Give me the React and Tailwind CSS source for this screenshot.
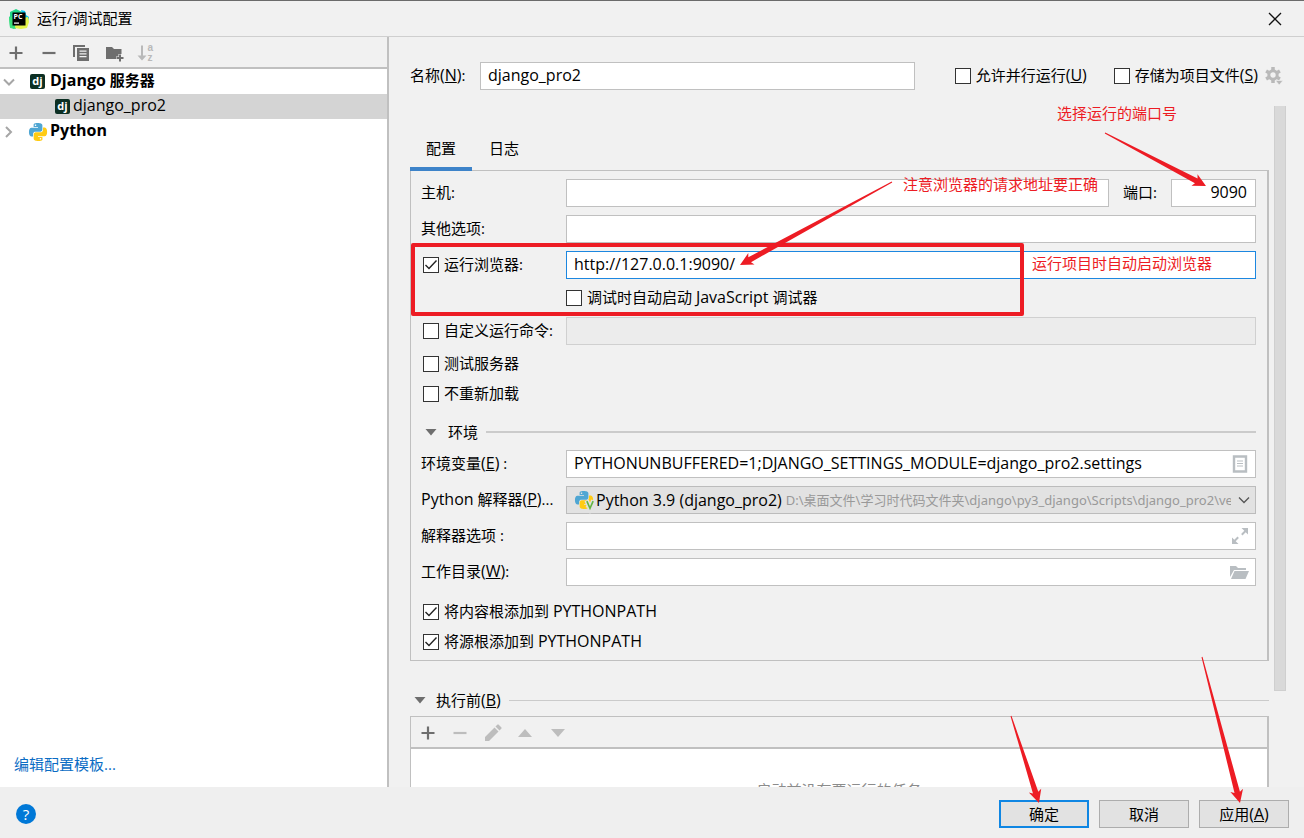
import React from 'react';

const PY_TOP =
  'M14.25.18l.9.2.73.26.59.3.45.32.34.34.25.34.16.33.1.3.04.26.02.2-.01.13V8.5l-.05.63-.13.55-.21.46-.26.38-.3.31-.33.25-.35.19-.35.14-.33.1-.3.07-.26.04-.21.02H8.77l-.69.05-.59.14-.5.22-.41.27-.33.32-.27.35-.2.36-.15.37-.1.35-.07.32-.04.27-.02.21v3.06H3.17l-.21-.03-.28-.07-.32-.12-.35-.18-.36-.26-.36-.36-.35-.46-.32-.59-.28-.73-.21-.88-.14-1.05-.05-1.23.06-1.22.16-1.04.24-.87.32-.71.36-.57.4-.44.42-.33.42-.24.4-.16.36-.1.32-.05.24-.01h.16l.06.01h8.16v-.83H6.18l-.01-2.75-.02-.37.05-.34.11-.31.17-.28.25-.26.31-.23.38-.2.44-.18.51-.15.58-.12.64-.1.71-.06.77-.04.84-.02 1.27.05zm-6.3 1.98l-.23.33-.08.41.08.41.23.34.33.22.41.09.41-.09.33-.22.23-.34.08-.41-.08-.41-.23-.33-.33-.22-.41-.09-.41.09z';
const PY_BOTTOM =
  'M21.1 6.11l.28.06.32.12.35.18.36.27.36.35.35.47.32.59.28.73.21.88.14 1.04.05 1.23-.06 1.23-.16 1.04-.24.86-.32.71-.36.57-.4.45-.42.33-.42.24-.4.16-.36.09-.32.05-.24.02-.16-.01h-8.22v.82h5.84l.01 2.76.02.36-.05.34-.11.31-.17.29-.25.25-.31.24-.38.2-.44.17-.51.15-.58.13-.64.09-.71.07-.77.04-.84.01-1.27-.04-1.07-.14-.9-.2-.73-.25-.59-.3-.45-.33-.34-.34-.25-.34-.16-.33-.1-.3-.04-.25-.02-.2.01-.13v-5.34l.05-.64.13-.54.21-.46.26-.38.3-.32.33-.24.35-.2.35-.14.33-.1.3-.06.26-.04.21-.02.13-.01h5.84l.69-.05.59-.14.5-.21.41-.28.33-.32.27-.35.2-.36.15-.36.1-.35.07-.32.04-.28.02-.21V6.07h2.09l.14.01zm-6.47 14.25l-.23.33-.08.41.08.41.23.33.33.23.41.08.41-.08.33-.23.23-.33.08-.41-.08-.41-.23-.33-.33-.23-.41-.08-.41.08z';

function PythonIcon({ venv }) {
  return (
    <svg viewBox="0 0 24 24" className="size-[18px] shrink-0 overflow-visible" aria-hidden="true">
      <path d={PY_TOP} fill="#4fa6d3" />
      <path d={PY_BOTTOM} fill="#ffcb13" />
      {venv && (
        <path d="M15.5 12.5 20 23.5 24.5 12.5" fill="none" stroke="#e2e2e2" strokeWidth="6" />
      )}
      {venv && (
        <path d="M15.8 13.5 20 23 24.2 13.5" fill="none" stroke="#62b543" strokeWidth="2.2" />
      )}
    </svg>
  );
}

function DjangoIcon() {
  return (
    <span
      aria-hidden="true"
      className="flex size-[15px] shrink-0 items-center justify-center rounded-[2px] bg-[#0c2f23] pb-px text-[11px] leading-[14px] font-bold text-white"
    >
      dj
    </span>
  );
}

function PyCharmIcon() {
  return (
    <svg viewBox="0 0 20 20" className="size-5" aria-hidden="true">
      <path d="M1 3 7 0l6 3-3 8-9 4z" fill="#21d789" />
      <path d="M12 1l4 1 1 4 3 2-1 5-4 2z" fill="#07c3f2" />
      <path d="M0 8 4 5l4 11-3 4-4-2z" fill="#21d789" />
      <path d="M14 9l5-1 1 5-2 6-6 1-7-1 2-4z" fill="#e4f34a" />
      <path d="M0 9l3-2 2 9 2 4-6-1z" fill="#3be07a" />
      <rect x="3.500" y="3.500" width="13" height="13" fill="#000" />
      <text x="4.500" y="10" fontSize="7" fontWeight="700" fill="#fff">PC</text>
      <rect x="5" y="13.500" width="5" height="1.200" fill="#fff" />
    </svg>
  );
}

const Plus = () => (
  <svg viewBox="0 0 16 16" className="size-4" fill="none" stroke="#6e6e6e" strokeWidth="2.2" aria-hidden="true">
    <path d="M8 1.500v13M1.500 8h13" />
  </svg>
);
const Minus = ({ color = '#6e6e6e' }) => (
  <svg viewBox="0 0 16 16" className="size-4" fill="none" stroke={color} strokeWidth="2.2" aria-hidden="true">
    <path d="M1.500 8h13" />
  </svg>
);
const CopyIcon = () => (
  <svg viewBox="0 0 18 18" className="size-[18px]" aria-hidden="true">
    <path d="M1 13V1h12v2H3v10z" fill="#6e6e6e" />
    <path fillRule="evenodd" d="M5 4h12v13H5zM7.5 6.500v1.300h7V6.500zM7.500 9.200v1.300h7V9.200zM7.500 11.900v1.300h7v-1.300z" fill="#6e6e6e" />
  </svg>
);
const FolderPlus = () => (
  <svg viewBox="0 0 20 18" className="h-[18px] w-5" aria-hidden="true">
    <path d="M1 3h6l2 2h7.500v5h-3v2.500H11V15H1z" fill="#6e6e6e" />
    <path d="M15 10.500v7M11.500 14h7" stroke="#6e6e6e" strokeWidth="2" />
  </svg>
);
const SortIcon = () => (
  <svg viewBox="0 0 18 18" className="size-[18px] overflow-visible font-['Liberation_Sans',sans-serif]" aria-hidden="true">
    <path d="M4 1.500h2v10h3.500L5 16.500.5 11.500H4z" fill="#b9b9b9" />
    <text x="10.500" y="7" fontSize="10" fontWeight="700" fill="#b9b9b9">a</text>
    <text x="10.500" y="17" fontSize="10" fontWeight="700" fill="#b9b9b9">z</text>
  </svg>
);
const Gear = () => (
  <svg viewBox="0 0 18 18" className="size-[18px]" aria-hidden="true">
    <g fill="none" stroke="#b9b9b9">
      <circle cx="8" cy="8" r="4.200" strokeWidth="3" />
      <path d="M8 0v3M8 13v3M1.100 4l2.600 1.500M12.300 10.500l2.600 1.500M1.100 12l2.600-1.500M12.300 5.500 14.900 4" strokeWidth="3.500" />
    </g>
    <path d="M10.500 13.500h7.500L14.200 18z" fill="#b9b9b9" stroke="#f1f1f1" strokeWidth=".6" />
  </svg>
);
const Triangle = () => (
  <svg viewBox="0 0 12 8" className="h-2 w-3" aria-hidden="true">
    <path d="M.5 1h11L6 7.500z" fill="#6e6e6e" />
  </svg>
);
const Chevron = ({ right }) => (
  <svg viewBox="0 0 12 12" className="size-3" fill="none" stroke="#a6a6a6" strokeWidth="2" aria-hidden="true">
    <path d={right ? 'M3 1l5 5-5 5' : 'M1 3.500l5 5 5-5'} />
  </svg>
);

const Latin = ({ children }) => <span className="text-[16px]">{children}</span>;
const Mnemonic = ({ letter }) => <span className="text-[16px]">(<u>{letter}</u>)</span>;

function Check({ id, checked, children }) {
  return (
    <span className="flex items-center gap-[5px] whitespace-nowrap">
      <span className="relative flex size-4 shrink-0">
        <input
          id={id}
          type="checkbox"
          defaultChecked={checked}
          className="peer size-4 appearance-none border border-[#333] bg-white"
        />
        <svg
          viewBox="0 0 16 16"
          className="pointer-events-none absolute inset-0 hidden size-4 peer-checked:block"
          fill="none"
          stroke="#222"
          strokeWidth="1.400"
          aria-hidden="true"
        >
          <path d="M2.500 8 6 11.500l7.500-8" />
        </svg>
      </span>
      <label htmlFor={id} className="pb-0.5">{children}</label>
    </span>
  );
}

const inputBase = 'h-7 w-full min-w-0 border border-[#c0c0c0] bg-white px-[7px] pb-0.5 text-[16px] outline-none';

function Row({ label, children }) {
  return (
    <div className="flex h-7 items-center">
      <div className="w-[145px] shrink-0 whitespace-nowrap">{label}</div>
      <div className="flex min-w-0 flex-1 items-center">{children}</div>
    </div>
  );
}

function FieldLabel({ htmlFor, children }) {
  return (
    <label htmlFor={htmlFor} className="block pb-0.5">
      {children}
    </label>
  );
}

function FieldWithIcon({ id, value, icon, label }) {
  return (
    <div className="relative flex flex-1">
      <input id={id} type="text" defaultValue={value} className={`${inputBase} pr-9`} />
      <button type="button" aria-label={label} className="absolute top-[5px] right-[7px]">
        {icon}
      </button>
    </div>
  );
}

function arrowPoints([x1, y1], [x2, y2]) {
  const len = Math.hypot(x2 - x1, y2 - y1);
  const ux = (x2 - x1) / len;
  const uy = (y2 - y1) / len;
  const at = (back, side) => `${x2 - ux * back - uy * side},${y2 - uy * back + ux * side}`;
  return [at(len, 0.5), at(11, 2.8), at(13, 6.5), at(0, 0), at(13, -6.5), at(11, -2.8), at(len, -0.5)].join(' ');
}

const ARROWS = [
  [[1105, 133], [1206, 186]],
  [[892, 182], [740, 265]],
  [[1011, 716], [1039, 803]],
  [[1202, 657], [1240, 803]],
];

function Annotations() {
  return (
    <div className="pointer-events-none absolute inset-0 whitespace-nowrap text-[#ed1c24]">
      <div className="absolute top-[243px] left-[411px] h-[73px] w-[613px] rounded-[2px] border-4 border-[#ed1c24]" />
      <svg className="absolute top-0 left-0 size-full" aria-hidden="true">
        {ARROWS.map(([from, to]) => (
          <polygon key={from.join()} points={arrowPoints(from, to)} fill="#ed1c24" />
        ))}
      </svg>
      <span className="absolute top-[102px] left-[1057px]">选择运行的端口号</span>
      <span className="absolute top-[173px] left-[903px]">注意浏览器的请求地址要正确</span>
      <span className="absolute top-[252px] left-[1032px]">运行项目时自动启动浏览器</span>
    </div>
  );
}

function Sidebar() {
  return (
    <aside className="flex w-[389px] shrink-0 flex-col border-r-2 border-[#c0c0c0] bg-white">
      <div className="flex h-8 shrink-0 items-center border-b-2 border-[#c0c0c0] bg-[#f1f1f1] pt-0.5 pl-2">
        <button type="button" aria-label="添加"><Plus /></button>
        <button type="button" aria-label="移除" className="ml-[17px]"><Minus /></button>
        <button type="button" aria-label="复制" className="ml-[15px]"><CopyIcon /></button>
        <button type="button" aria-label="新建文件夹" className="ml-[15px]"><FolderPlus /></button>
        <button type="button" aria-label="排序" className="ml-3"><SortIcon /></button>
      </div>
      <ul className="flex-1">
        <li className="flex h-[25px] items-center pl-[3px] font-bold">
          <Chevron />
          <span className="ml-[15px] flex items-center gap-[5px]">
            <DjangoIcon />
            <span className="pb-[3px]"><Latin>Django</Latin> 服务器</span>
          </span>
        </li>
        <li className="flex h-[25px] items-center gap-[3px] bg-[#d4d4d4] pl-[55px]">
          <DjangoIcon />
          <span className="pb-[3px]"><Latin>django_pro2</Latin></span>
        </li>
        <li className="flex h-[25px] items-center pl-[3px] font-bold">
          <Chevron right />
          <span className="ml-3.5 flex items-center gap-[3px]">
            <PythonIcon />
            <span className="pb-[3px]"><Latin>Python</Latin></span>
          </span>
        </li>
      </ul>
      <a href="#templates" className="mb-3 ml-3.5 self-start text-[#0a6cc4]">编辑配置模板...</a>
    </aside>
  );
}

function ConfigPanel() {
  return (
    <div className="border-r-2 border-b border-l border-[#c0c0c0] pt-2 pr-[11px] pb-[3px] pl-2.5">
      <div className="flex flex-col gap-2">
        <Row label={<FieldLabel htmlFor="host">主机:</FieldLabel>}>
          <input id="host" type="text" className={`${inputBase} flex-1`} />
          <label htmlFor="port" className="mx-3.5 shrink-0 pb-0.5">端口:</label>
          <input
            id="port"
            type="text"
            defaultValue="9090"
            className="h-7 w-[85px] shrink-0 border border-[#c0c0c0] bg-white px-2 pb-0.5 text-right text-[16px] outline-none"
          />
        </Row>
        <Row label={<FieldLabel htmlFor="extra">其他选项:</FieldLabel>}>
          <input id="extra" type="text" className={inputBase} />
        </Row>
        <Row label={<div className="pl-0.5"><Check id="browser" checked>运行浏览器:</Check></div>}>
          <input
            type="text"
            aria-label="浏览器地址"
            defaultValue="http://127.0.0.1:9090/"
            className="h-7 w-full border border-[#1c87e0] bg-white px-[7px] pb-0.5 text-[16px] outline-none"
          />
        </Row>
      </div>
      <div className="mt-[5px] flex h-7 items-center pl-[145px]">
        <Check id="js">调试时自动启动 <Latin>JavaScript</Latin> 调试器</Check>
      </div>
      <div className="mt-[5px]">
        <Row label={<div className="pl-0.5"><Check id="custom">自定义运行命令:</Check></div>}>
          <input type="text" aria-label="自定义运行命令" disabled className="h-7 w-full border border-[#d0d0d0] bg-[#ececec]" />
        </Row>
      </div>
      <div className="mt-1 flex h-[30px] items-center pl-0.5"><Check id="test">测试服务器</Check></div>
      <div className="flex h-[30px] items-center pl-0.5"><Check id="noreload">不重新加载</Check></div>
      <div className="mt-2 flex h-[30px] items-center pl-1">
        <button type="button" aria-label="折叠环境" className="mr-[11px]"><Triangle /></button>
        <span>环境</span>
        <span className="ml-2 h-0.5 flex-1 bg-[#cbcbcb]" />
      </div>
      <div className="mt-[3px] flex flex-col gap-2">
        <Row label={<FieldLabel htmlFor="env">环境变量<Mnemonic letter="E" /> :</FieldLabel>}>
          <FieldWithIcon
            id="env"
            value="PYTHONUNBUFFERED=1;DJANGO_SETTINGS_MODULE=django_pro2.settings"
            label="编辑环境变量"
            icon={
              <svg viewBox="0 0 18 18" className="size-[18px]" fill="none" stroke="#b9bec2" aria-hidden="true">
                <path d="M3 1.500h12v15H3z" strokeWidth="2.400" />
                <path d="M6 6h6M6 8.500h6M6 11h6" />
              </svg>
            }
          />
        </Row>
        <Row label={<FieldLabel htmlFor="interp"><Latin>Python</Latin> 解释器<Mnemonic letter="P" />...</FieldLabel>}>
          <div className="relative flex h-7 min-w-0 flex-1 items-center border border-[#bcbcbc] bg-[#e2e2e2] pl-2">
            <PythonIcon venv />
            <span className="ml-[3px] shrink-0"><Latin>Python 3.9 (django_pro2)</Latin></span>
            <span className="mr-6 ml-1 min-w-0 flex-1 overflow-hidden font-['Noto_Sans','Noto_Sans_CJK_SC',sans-serif] text-[13px] whitespace-nowrap text-[#999]">
              D:\桌面文件\学习时代码文件夹\django\py3_django\Scripts\django_pro2\venv
            </span>
            <svg viewBox="0 0 12 12" className="absolute right-[5px] size-3" fill="none" stroke="#555" strokeWidth="1.300" aria-hidden="true">
              <path d="M1 3.500l5 5 5-5" />
            </svg>
            <select id="interp" className="absolute inset-0 size-full opacity-0">
              <option>Python 3.9 (django_pro2)</option>
            </select>
          </div>
        </Row>
        <Row label={<FieldLabel htmlFor="opts">解释器选项 :</FieldLabel>}>
          <FieldWithIcon
            id="opts"
            label="展开"
            icon={
              <svg viewBox="0 0 18 18" className="size-[18px]" aria-hidden="true">
                <path d="M10.500 1H17v6.500l-2.300-2.300-3.200 3.200-1.400-1.400 3.200-3.200zM7.500 17H1v-6.500l2.300 2.300 3.200-3.200 1.400 1.400-3.200 3.200z" fill="#b9bec2" />
              </svg>
            }
          />
        </Row>
        <Row label={<FieldLabel htmlFor="cwd">工作目录<Mnemonic letter="W" />:</FieldLabel>}>
          <FieldWithIcon
            id="cwd"
            label="浏览"
            icon={
              <svg viewBox="0 0 19 18" className="h-[18px] w-[19px]" aria-hidden="true">
                <path d="M0 3h6l2 2h8v2H4L0 14z" fill="#b9bec2" />
                <path d="M4.500 8H19l-3.500 8H1z" fill="#b9bec2" />
              </svg>
            }
          />
        </Row>
      </div>
      <div className="mt-[11px] flex h-[30px] items-center pl-0.5">
        <Check id="content" checked>将内容根添加到 <Latin>PYTHONPATH</Latin></Check>
      </div>
      <div className="flex h-[30px] items-center pl-0.5">
        <Check id="source" checked>将源根添加到 <Latin>PYTHONPATH</Latin></Check>
      </div>
    </div>
  );
}

export default function App() {
  return (
    <div className="relative flex h-screen flex-col overflow-hidden bg-[#f1f1f1] font-['Open_Sans','Noto_Sans_CJK_SC',sans-serif] text-[15px] leading-[22px] text-black">
      <header className="flex h-[37px] shrink-0 items-center border-t border-b border-t-[#6b6b6b] border-b-[#cfcfcf] pl-[9px]">
        <PyCharmIcon />
        <h1 className="ml-2 flex-1 pb-0.5">运行/调试配置</h1>
        <button type="button" aria-label="关闭" className="mr-[22px]">
          <svg viewBox="0 0 14 14" className="size-3.5" stroke="#111" strokeWidth="1.300" aria-hidden="true">
            <path d="M1 1l12 12M13 1 1 13" />
          </svg>
        </button>
      </header>

      <div className="flex min-h-0 flex-1">
        <Sidebar />
        <main className="flex min-w-0 flex-1 flex-col overflow-hidden pt-[25px] pr-[18px] pl-[21px]">
          <div className="flex h-7 shrink-0 items-center pr-[3px]">
            <label htmlFor="name" className="w-[70px] shrink-0 pb-0.5">名称<Mnemonic letter="N" />:</label>
            <input id="name" type="text" defaultValue="django_pro2" className={`${inputBase} flex-1`} />
            <div className="ml-10 flex items-center">
              <Check id="parallel">允许并行运行<Mnemonic letter="U" /></Check>
              <span className="ml-[27px]"><Check id="store">存储为项目文件<Mnemonic letter="S" /></Check></span>
              <button type="button" aria-label="设置" className="ml-[7px]"><Gear /></button>
            </div>
          </div>

          <div className="mt-4 flex min-h-0 flex-1 gap-[5px]">
            <div className="min-w-0 flex-1 overflow-hidden">
              <div role="tablist" className="flex h-[65px] items-end border-b border-[#c0c0c0]">
                <button type="button" role="tab" aria-selected="true" className="-mb-px h-[43px] border-b-4 border-[#3d83c9] px-4 pt-px">配置</button>
                <button type="button" role="tab" aria-selected="false" className="-mb-px h-[43px] border-b-4 border-transparent px-[17px] pt-px">日志</button>
              </div>
              <ConfigPanel />
              <section className="mt-6">
                <div className="flex h-[30px] items-center pl-1">
                  <button type="button" aria-label="折叠执行前" className="mr-2.5"><Triangle /></button>
                  <span>执行前<Mnemonic letter="B" /></span>
                  <span className="ml-2 h-px flex-1 bg-[#cbcbcb]" />
                </div>
                <div className="mt-px border-t border-r-2 border-l border-[#c0c0c0]">
                  <div className="flex h-8 items-center gap-4 border-b-2 border-[#c0c0c0] pt-0.5 pl-[9px]">
                    <button type="button" aria-label="添加任务"><Plus /></button>
                    <button type="button" aria-label="移除任务"><Minus color="#bdbdbd" /></button>
                    <button type="button" aria-label="编辑任务">
                      <svg viewBox="0 0 18 18" className="size-[18px]" fill="#bdbdbd" aria-hidden="true">
                        <path d="M1 17v-4L10.500 3.500l4 4L5 17zM11.500 2.500 13.500.5h1l3 3v1l-2 2z" />
                      </svg>
                    </button>
                    <button type="button" aria-label="上移">
                      <svg viewBox="0 0 14 8" className="h-2 w-3.5" fill="#bdbdbd" aria-hidden="true"><path d="M0 8h14L7 0z" /></svg>
                    </button>
                    <button type="button" aria-label="下移" className="ml-[3px]">
                      <svg viewBox="0 0 14 8" className="h-2 w-3.5" fill="#bdbdbd" aria-hidden="true"><path d="M0 0h14L7 8z" /></svg>
                    </button>
                  </div>
                  <p className="h-20 bg-white pt-[30px] text-center text-[#8c8c8c]">启动前没有要运行的任务</p>
                </div>
              </section>
            </div>
            <div className="mb-24 w-3 shrink-0 border-r border-b border-l border-[#cfcfcf] bg-[#d9d9d9]" />
          </div>
        </main>
      </div>

      <footer className="flex h-[51px] shrink-0 items-center gap-2.5 bg-[#efefef] pt-0.5 pr-[15px] pl-4">
        <button type="button" aria-label="帮助" className="mr-auto flex size-5 items-center justify-center rounded-full bg-[#0078d7] text-white">?</button>
        <button type="button" className="h-7 w-[90px] border-2 border-[#0f86e3] bg-[#e2e2e2]">确定</button>
        <button type="button" className="h-7 w-[90px] border border-[#adadad] bg-[#e2e2e2]">取消</button>
        <button type="button" className="h-7 w-[90px] border border-[#adadad] bg-[#e2e2e2]">应用<Mnemonic letter="A" /></button>
      </footer>

      <Annotations />
    </div>
  );
}
